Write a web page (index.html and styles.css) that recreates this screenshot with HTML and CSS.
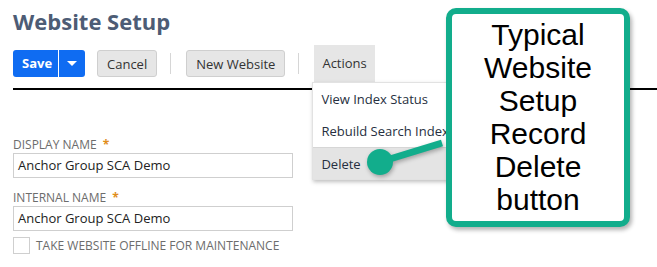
FILE: index.html
```html
<!DOCTYPE html>
<html lang="en">
<head>
    <meta charset="UTF-8">
    <title>Website Setup</title>
    <link rel="stylesheet" href="styles.css">
</head>
<body>

<div class="page">
    <h1>Website Setup</h1>

    <div class="toolbar">
        <div class="btn-save">
            <span class="save-label">Save</span>
            <span class="save-arrow"></span>
        </div>
        <button class="btn">Cancel</button>
        <span class="sep"></span>
        <button class="btn wide">New Website</button>
        <span class="sep"></span>
        <div class="actions">
            <span class="actions-label">Actions</span>
            <ul class="menu">
                <li>View Index Status</li>
                <li>Rebuild Search Index</li>
                <li class="active">Delete</li>
            </ul>
        </div>
    </div>

    <div class="rule"></div>

    <div class="form">
        <div class="field">
            <label>Display Name <span class="req">*</span></label>
            <div class="input">Anchor Group SCA Demo</div>
        </div>
        <div class="field">
            <label>Internal Name <span class="req">*</span></label>
            <div class="input">Anchor Group SCA Demo</div>
        </div>
        <div class="check">
            <span class="box"></span>
            <span>Take website offline for maintenance</span>
        </div>
    </div>

    <!-- annotation -->
    <svg class="pointer" width="90" height="60" viewBox="0 0 90 60">
        <line x1="22" y1="30" x2="84" y2="11" stroke="#12ad8c" stroke-width="7"/>
        <circle cx="22" cy="30" r="13" fill="#12ad8c"/>
    </svg>
    <div class="callout">Typical Website Setup Record Delete button</div>
</div>

</body>
</html>
```

FILE: styles.css
```css
* {
    margin: 0;
    padding: 0;
    box-sizing: border-box;
}

body {
    font-family: 'Open Sans', sans-serif;
    background: white;
    color: #333;
}

.page {
    position: relative;
    width: 657px;
    height: 267px;
    padding: 7px 0 0 13px;
    overflow: hidden;
}

h1 {
    font-size: 22px;
    font-weight: bold;
    color: #4d5c75;
    line-height: 28px;
}

.toolbar {
    display: flex;
    align-items: center;
    margin-top: 10px;
    height: 37px;
}

.btn-save {
    display: flex;
    height: 27px;
    background: #0f6cf2;
    border-radius: 3px;
    color: white;
    font-size: 13px;
    font-weight: bold;
}

.save-label {
    width: 46px;
    padding-left: 9px;
    line-height: 27px;
    border-right: 1px solid white;
}

.save-arrow {
    width: 26px;
    position: relative;
}

.save-arrow::after {
    content: "";
    position: absolute;
    left: 8px;
    top: 11px;
    border-left: 5px solid transparent;
    border-right: 5px solid transparent;
    border-top: 5px solid white;
}

.btn {
    height: 27px;
    margin-left: 12px;
    padding: 0 9px;
    background: #e6e6e6;
    border: 1px solid #cfcfcf;
    border-radius: 3px;
    font-family: 'Open Sans', sans-serif;
    font-size: 13px;
    color: #333;
}

.btn.wide {
    margin-left: 15px;
}

.sep {
    width: 1px;
    height: 21px;
    background: #d6d6d6;
    margin-left: 13px;
}

.actions {
    position: relative;
    margin-left: 15px;
    height: 37px;
}

.actions-label {
    display: block;
    height: 37px;
    line-height: 37px;
    padding: 0 8px;
    background: #e6e6e6;
    font-size: 13px;
    color: #333;
}

.menu {
    position: absolute;
    top: 37px;
    left: -2px;
    width: 160px;
    list-style: none;
    background: white;
    border: 1px solid #e2e2e2;
    box-shadow: 1px 2px 4px rgba(0, 0, 0, 0.25);
    z-index: 2;
}

.menu li {
    height: 32px;
    line-height: 32px;
    padding-left: 8px;
    font-size: 13px;
    color: #262f40;
    white-space: nowrap;
}

.menu li.active {
    background: #e4e4e4;
    border-top: 1px solid #d6d6d6;
}

.rule {
    height: 2px;
    background: black;
    margin-top: 6px;
}

.form {
    padding-top: 47px;
    width: 280px;
}

.field {
    margin-bottom: 12px;
}

.field label {
    display: block;
    font-size: 12px;
    text-transform: uppercase;
    color: #6c6c6c;
    line-height: 16px;
}

.req {
    color: #e08d1c;
    font-weight: bold;
    margin-left: 3px;
}

.input {
    height: 25px;
    line-height: 23px;
    padding-left: 4px;
    border: 1px solid #cfcfcf;
    font-size: 13px;
    color: #222;
}

.check {
    display: flex;
    align-items: center;
    gap: 6px;
    font-size: 12px;
    text-transform: uppercase;
    color: #6c6c6c;
    margin-top: -6px;
}

.box {
    width: 17px;
    height: 17px;
    border: 1px solid #cfcfcf;
}

.pointer {
    position: absolute;
    left: 358px;
    top: 132px;
    z-index: 3;
    filter: drop-shadow(1px 2px 2px rgba(0, 0, 0, 0.3));
}

.callout {
    position: absolute;
    left: 446px;
    top: 8px;
    width: 184px;
    height: 219px;
    padding: 4px 8px 0;
    border: 6px solid #12ad8c;
    border-radius: 10px;
    background: white;
    box-shadow: 2px 3px 4px rgba(0, 0, 0, 0.3);
    font-family: 'Liberation Sans', Arial, sans-serif;
    font-size: 30px;
    line-height: 33px;
    text-align: center;
    color: black;
    z-index: 4;
}
```
